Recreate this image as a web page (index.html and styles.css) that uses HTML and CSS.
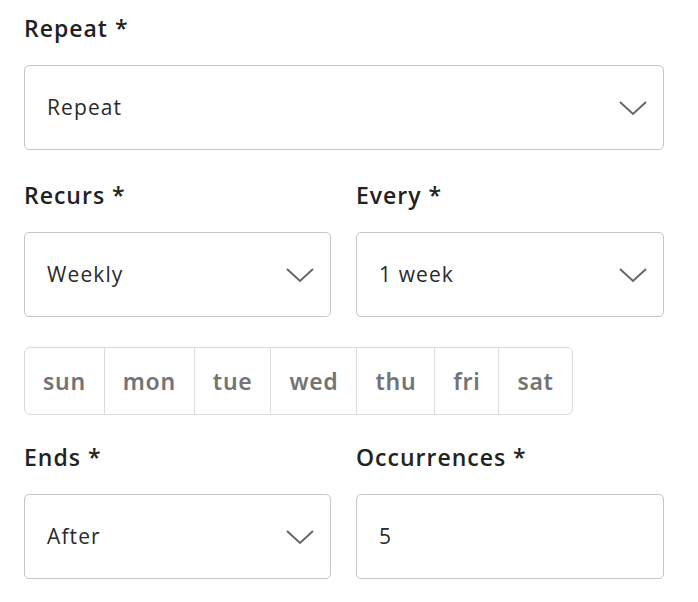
FILE: index.html
```html
<!DOCTYPE html>
<html lang="en">
<head>
<meta charset="UTF-8">
<title>Repeat</title>
<link rel="stylesheet" href="styles.css">
</head>
<body>

<form class="form">
    <div class="field">
        <div class="label">Repeat *</div>
        <div class="select">
            <span>Repeat</span>
            <svg class="chevron" width="30" height="16" viewBox="0 0 30 16"><path d="M2 2 L15 14 L28 2" fill="none" stroke="#666" stroke-width="2"/></svg>
        </div>
    </div>

    <div class="row">
        <div class="field">
            <div class="label">Recurs *</div>
            <div class="select">
                <span>Weekly</span>
                <svg class="chevron" width="30" height="16" viewBox="0 0 30 16"><path d="M2 2 L15 14 L28 2" fill="none" stroke="#666" stroke-width="2"/></svg>
            </div>
        </div>
        <div class="field">
            <div class="label">Every *</div>
            <div class="select">
                <span>1 week</span>
                <svg class="chevron" width="30" height="16" viewBox="0 0 30 16"><path d="M2 2 L15 14 L28 2" fill="none" stroke="#666" stroke-width="2"/></svg>
            </div>
        </div>
    </div>

    <div class="days">
        <div class="day">sun</div>
        <div class="day">mon</div>
        <div class="day">tue</div>
        <div class="day">wed</div>
        <div class="day">thu</div>
        <div class="day">fri</div>
        <div class="day">sat</div>
    </div>

    <div class="row">
        <div class="field">
            <div class="label">Ends *</div>
            <div class="select">
                <span>After</span>
                <svg class="chevron" width="30" height="16" viewBox="0 0 30 16"><path d="M2 2 L15 14 L28 2" fill="none" stroke="#666" stroke-width="2"/></svg>
            </div>
        </div>
        <div class="field">
            <div class="label">Occurrences *</div>
            <div class="select">
                <span>5</span>
            </div>
        </div>
    </div>
</form>

</body>
</html>
```

FILE: styles.css
```css
body {
    margin: 0;
    font-family: "Open Sans", sans-serif;
    color: #222;
    background: #fff;
}
.form {
    width: 640px;
    padding: 13px 24px 0 24px;
}
.field {
    margin-bottom: 30px;
}
.label {
    font-size: 23px;
    font-weight: 600;
    line-height: 30px;
    margin-bottom: 22px;
    color: #222;
    letter-spacing: 1px;
}
.select {
    height: 83px;
    border: 1px solid #c6c6c6;
    border-radius: 5px;
    display: flex;
    align-items: center;
    justify-content: space-between;
    padding: 0 15px 0 22px;
    font-size: 21px;
    line-height: 28px;
    color: #2a2a2a;
    letter-spacing: 1.1px;
}
.select span {
    margin-top: -2px;
}
.chevron {
    display: block;
}
.row {
    display: grid;
    grid-template-columns: 307px 308px;
    column-gap: 25px;
}
.days {
    display: inline-flex;
    border: 1px solid #dcdcdc;
    border-radius: 6px;
    margin-bottom: 27px;
}
.day {
    height: 66px;
    line-height: 66px;
    padding: 0 18px;
    font-family: "Noto Sans", sans-serif;
    font-size: 23px;
    font-weight: 600;
    color: #747474;
    letter-spacing: 0.7px;
    border-right: 1px solid #dcdcdc;
}
.day:last-child {
    border-right: none;
}
```
